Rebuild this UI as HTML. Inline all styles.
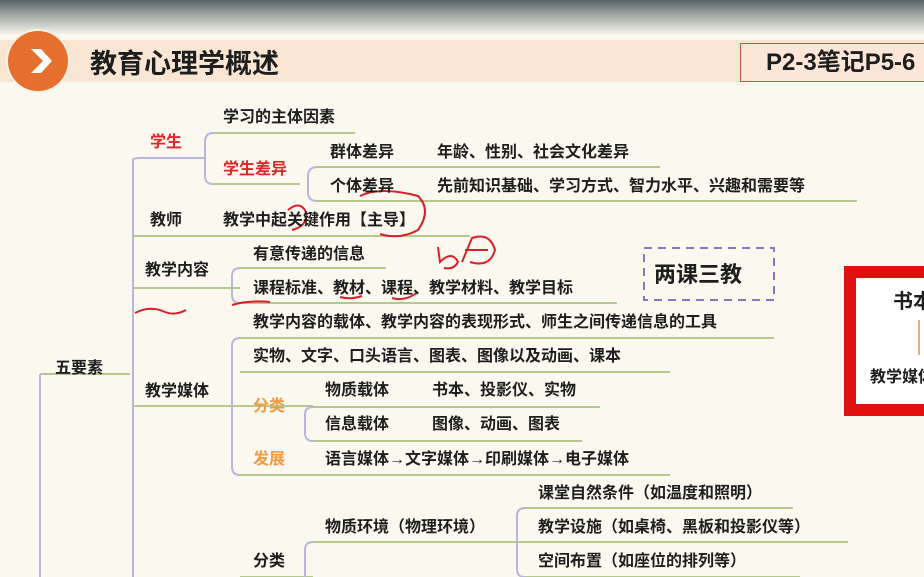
<!DOCTYPE html>
<html><head><meta charset="utf-8"><style>
*{margin:0;padding:0}
body{width:924px;height:577px;overflow:hidden;background:#fbf9ef;position:relative;font-family:"Liberation Sans","Noto Sans CJK SC",sans-serif;color:#1e1e1e}
.t{position:absolute;font-size:16px;line-height:20px;white-space:nowrap;font-weight:bold}
.r{color:#e0262a;font-weight:bold}
.o{color:#ef9a45}
svg{position:absolute;left:0;top:0}
</style></head><body>
<div style="position:absolute;left:0;top:0;width:924px;height:34px;background:linear-gradient(#5a6468,#9aa2a0 40%,#f3f2ea)"></div>
<div style="position:absolute;left:0;top:40px;width:924px;height:42px;background:#f8e5d2"></div>
<div style="position:absolute;left:8px;top:31px;width:60px;height:60px;border-radius:50%;background:#e5702d;box-shadow:0 0 0 2px #fbf0e4"></div>
<svg width="924" height="577">
<path d="M31 49 L43 61 L31 73 L41 73 L52 61 L41 49Z" fill="#fff"/>
<g stroke="#b5c98c" stroke-width="2" fill="none">
<path d="M213 133H355M213 184H300M318 167H660M318 201H857M133 236H470M240 268H386M240 303H617M133 288H240M240 338H774M240 372H670M313 407H600M313 441H582M240 406H313M240 475H670M40 374H130M133 406H240M525 508H793M525 542H848M313 542H525M240 577H313M525 577H800"/>
</g>
<g stroke="#b8b6dc" stroke-width="2" fill="none">
<path d="M133 160V577M213 133Q205 133 205 142V176Q205 184 213 184M318 167Q308 167 308 176V193Q308 201 318 201M240 268Q232 268 232 276V295Q232 303 240 303M240 338Q232 338 232 346V467Q232 475 240 475M313 407Q305 407 305 415V433Q305 441 313 441M525 508Q517 508 517 516V569Q517 577 525 577M313 542Q305 542 305 550V577M40 374V577M133 160Q133 158 140 158H205"/>
</g>
<g stroke="#d8202a" stroke-width="2" fill="none">
<path d="M288 210Q300 200 306 212Q308 226 292 230M360 196Q380 186 418 196Q432 210 418 230Q400 240 380 234M438 247L440 262Q452 250 458 262Q454 270 444 268M462 262L472 238Q490 232 495 250Q490 268 470 262M465 250L488 250M135 313Q150 305 165 312Q175 316 186 310M232 305Q248 300 270 302M340 297Q350 300 362 296M392 298Q405 302 418 292"/>
</g>
<rect x="644" y="248" width="130" height="52" fill="none" stroke="#8e74bd" stroke-width="2" stroke-dasharray="8 6"/>
<rect x="850" y="272" width="80" height="138" fill="#fff" stroke="#e01010" stroke-width="12"/>
<path d="M919 320V355" stroke="#e39060" stroke-width="1.5"/>
</svg>
<div class="t" style="left:90px;top:48px;font-size:27px;line-height:32px;font-weight:bold">教育心理学概述</div>
<div style="position:absolute;left:740px;top:43px;width:190px;height:39px;border:1.5px solid #c9524a;background:#fbe6d8;box-sizing:border-box"></div>
<div class="t" style="left:766px;top:49px;font-size:24px;line-height:28px;font-weight:bold">P2-3笔记P5-6</div>
<div class="t r" style="left:150px;top:133px">学生</div>
<div class="t" style="left:223px;top:108px">学习的主体因素</div>
<div class="t r" style="left:223px;top:160px">学生差异</div>
<div class="t" style="left:330px;top:143px">群体差异</div>
<div class="t" style="left:437px;top:143px">年龄、性别、社会文化差异</div>
<div class="t" style="left:330px;top:177px">个体差异</div>
<div class="t" style="left:437px;top:177px">先前知识基础、学习方式、智力水平、兴趣和需要等</div>
<div class="t" style="left:150px;top:211px">教师</div>
<div class="t" style="left:223px;top:211px">教学中起关键作用【主导】</div>
<div class="t" style="left:145px;top:261px">教学内容</div>
<div class="t" style="left:253px;top:245px">有意传递的信息</div>
<div class="t" style="left:253px;top:279px">课程标准、教材、课程、教学材料、教学目标</div>
<div class="t" style="left:654px;top:262px;font-size:22px;line-height:26px;font-weight:bold">两课三教</div>
<div class="t" style="left:893px;top:290px;font-size:20px;line-height:24px">书本</div>
<div class="t" style="left:870px;top:368px">教学媒体</div>
<div class="t" style="left:253px;top:313px">教学内容的载体、教学内容的表现形式、师生之间传递信息的工具</div>
<div class="t" style="left:253px;top:347px">实物、文字、口头语言、图表、图像以及动画、课本</div>
<div class="t" style="left:55px;top:359px">五要素</div>
<div class="t" style="left:145px;top:382px">教学媒体</div>
<div class="t o" style="left:253px;top:397px">分类</div>
<div class="t" style="left:325px;top:381px">物质载体</div>
<div class="t" style="left:432px;top:381px">书本、投影仪、实物</div>
<div class="t" style="left:325px;top:415px">信息载体</div>
<div class="t" style="left:432px;top:415px">图像、动画、图表</div>
<div class="t o" style="left:253px;top:450px">发展</div>
<div class="t" style="left:325px;top:450px">语言媒体→文字媒体→印刷媒体→电子媒体</div>
<div class="t" style="left:538px;top:484px">课堂自然条件（如温度和照明）</div>
<div class="t" style="left:325px;top:518px">物质环境（物理环境）</div>
<div class="t" style="left:538px;top:518px">教学设施（如桌椅、黑板和投影仪等）</div>
<div class="t" style="left:253px;top:552px">分类</div>
<div class="t" style="left:538px;top:552px">空间布置（如座位的排列等）</div>
</body></html>
